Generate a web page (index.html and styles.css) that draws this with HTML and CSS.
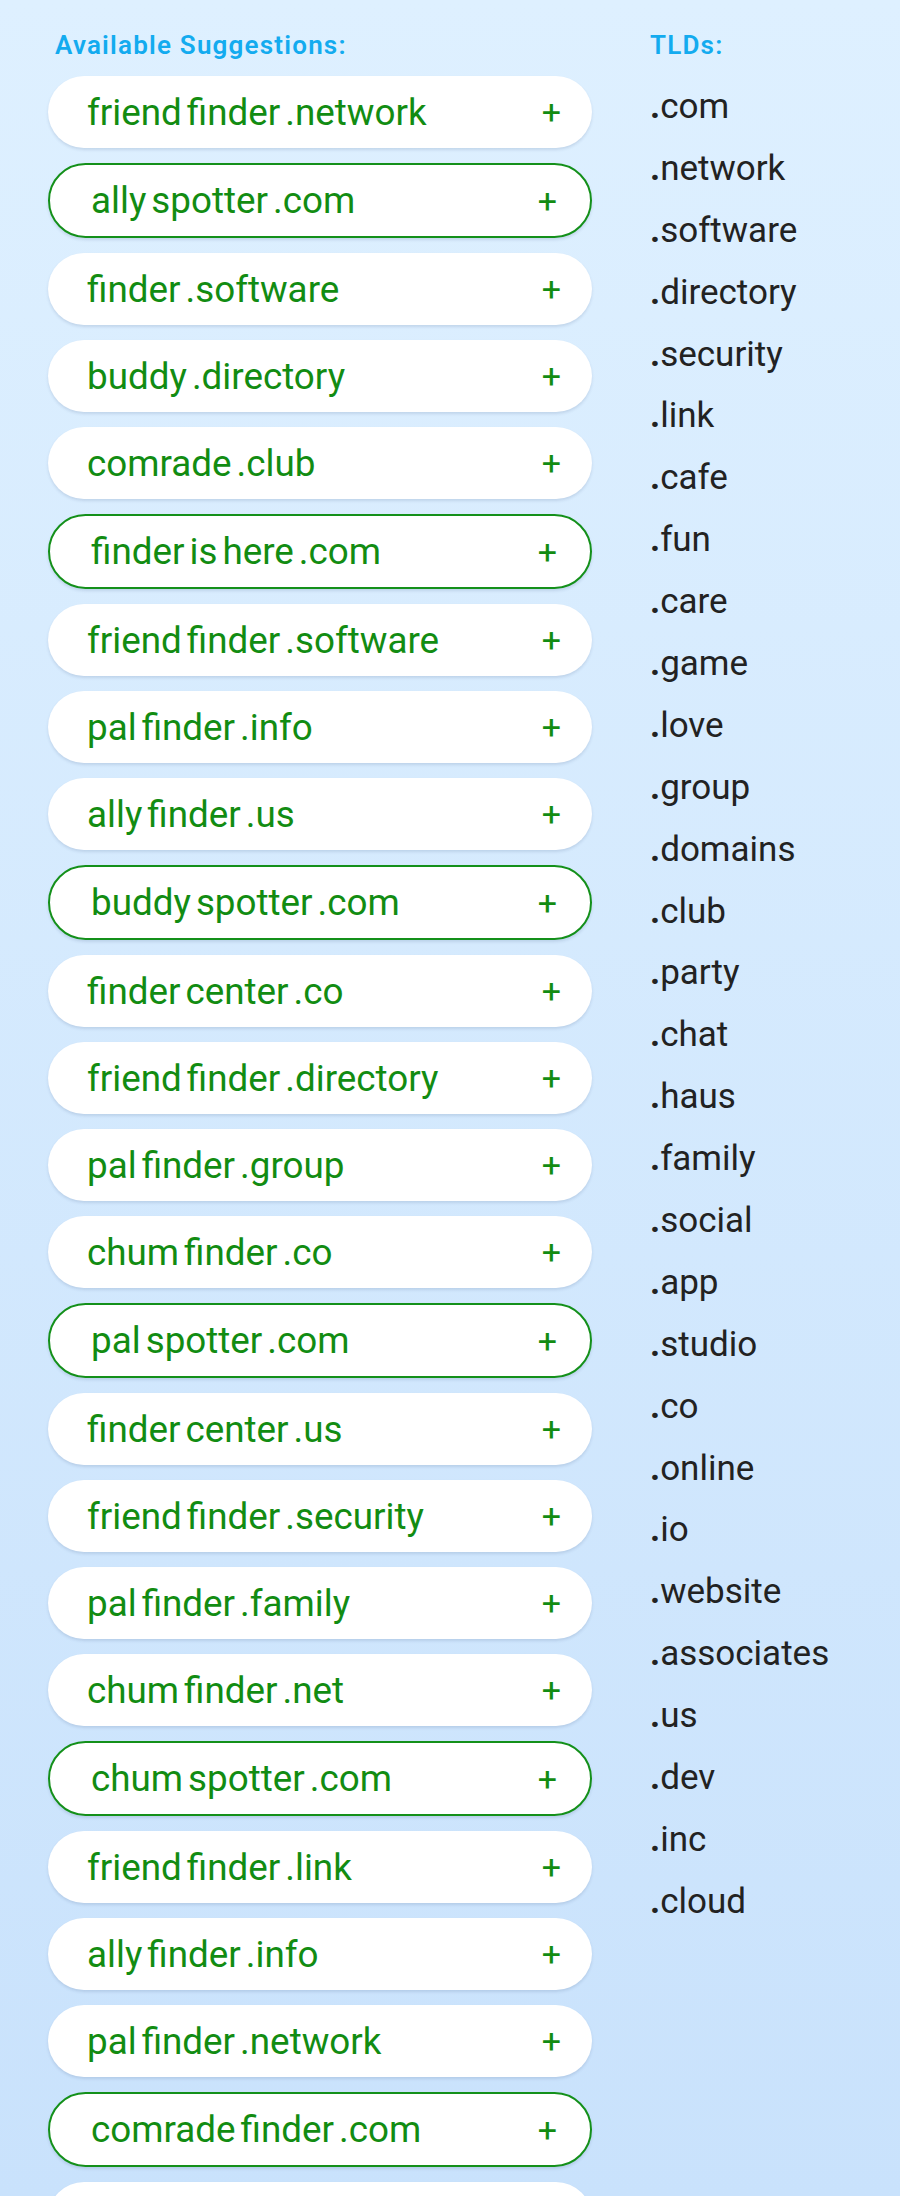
FILE: index.html
```html
<!DOCTYPE html>
<html lang="en">
<head>
<meta charset="utf-8">
<title>Domain Suggestions</title>
<link rel="stylesheet" href="styles.css">
</head>
<body>
<main class="page">
  <section class="suggestions">
    <h2 class="heading">Available Suggestions:</h2>
    <ul class="pills">
      <li class="pill"><span class="name"><span>friend</span><span>finder</span><span>.network</span></span><span class="add">+</span></li>
      <li class="pill pill--hl"><span class="name"><span>ally</span><span>spotter</span><span>.com</span></span><span class="add">+</span></li>
      <li class="pill"><span class="name"><span>finder</span><span>.software</span></span><span class="add">+</span></li>
      <li class="pill"><span class="name"><span>buddy</span><span>.directory</span></span><span class="add">+</span></li>
      <li class="pill"><span class="name"><span>comrade</span><span>.club</span></span><span class="add">+</span></li>
      <li class="pill pill--hl"><span class="name"><span>finder</span><span>is</span><span>here</span><span>.com</span></span><span class="add">+</span></li>
      <li class="pill"><span class="name"><span>friend</span><span>finder</span><span>.software</span></span><span class="add">+</span></li>
      <li class="pill"><span class="name"><span>pal</span><span>finder</span><span>.info</span></span><span class="add">+</span></li>
      <li class="pill"><span class="name"><span>ally</span><span>finder</span><span>.us</span></span><span class="add">+</span></li>
      <li class="pill pill--hl"><span class="name"><span>buddy</span><span>spotter</span><span>.com</span></span><span class="add">+</span></li>
      <li class="pill"><span class="name"><span>finder</span><span>center</span><span>.co</span></span><span class="add">+</span></li>
      <li class="pill"><span class="name"><span>friend</span><span>finder</span><span>.directory</span></span><span class="add">+</span></li>
      <li class="pill"><span class="name"><span>pal</span><span>finder</span><span>.group</span></span><span class="add">+</span></li>
      <li class="pill"><span class="name"><span>chum</span><span>finder</span><span>.co</span></span><span class="add">+</span></li>
      <li class="pill pill--hl"><span class="name"><span>pal</span><span>spotter</span><span>.com</span></span><span class="add">+</span></li>
      <li class="pill"><span class="name"><span>finder</span><span>center</span><span>.us</span></span><span class="add">+</span></li>
      <li class="pill"><span class="name"><span>friend</span><span>finder</span><span>.security</span></span><span class="add">+</span></li>
      <li class="pill"><span class="name"><span>pal</span><span>finder</span><span>.family</span></span><span class="add">+</span></li>
      <li class="pill"><span class="name"><span>chum</span><span>finder</span><span>.net</span></span><span class="add">+</span></li>
      <li class="pill pill--hl"><span class="name"><span>chum</span><span>spotter</span><span>.com</span></span><span class="add">+</span></li>
      <li class="pill"><span class="name"><span>friend</span><span>finder</span><span>.link</span></span><span class="add">+</span></li>
      <li class="pill"><span class="name"><span>ally</span><span>finder</span><span>.info</span></span><span class="add">+</span></li>
      <li class="pill"><span class="name"><span>pal</span><span>finder</span><span>.network</span></span><span class="add">+</span></li>
      <li class="pill pill--hl"><span class="name"><span>comrade</span><span>finder</span><span>.com</span></span><span class="add">+</span></li>
      <li class="pill" aria-hidden="true"></li>
    </ul>
  </section>
  <aside class="tlds">
    <h2 class="heading">TLDs:</h2>
    <ul class="tld-list">
      <li><b>.</b>com</li>
      <li><b>.</b>network</li>
      <li><b>.</b>software</li>
      <li><b>.</b>directory</li>
      <li><b>.</b>security</li>
      <li><b>.</b>link</li>
      <li><b>.</b>cafe</li>
      <li><b>.</b>fun</li>
      <li><b>.</b>care</li>
      <li><b>.</b>game</li>
      <li><b>.</b>love</li>
      <li><b>.</b>group</li>
      <li><b>.</b>domains</li>
      <li><b>.</b>club</li>
      <li><b>.</b>party</li>
      <li><b>.</b>chat</li>
      <li><b>.</b>haus</li>
      <li><b>.</b>family</li>
      <li><b>.</b>social</li>
      <li><b>.</b>app</li>
      <li><b>.</b>studio</li>
      <li><b>.</b>co</li>
      <li><b>.</b>online</li>
      <li><b>.</b>io</li>
      <li><b>.</b>website</li>
      <li><b>.</b>associates</li>
      <li><b>.</b>us</li>
      <li><b>.</b>dev</li>
      <li><b>.</b>inc</li>
      <li><b>.</b>cloud</li>
    </ul>
  </aside>
</main>
</body>
</html>
```
FILE: styles.css
```css
html, body {
  margin: 0;
  padding: 0;
}

body {
  height: 2196px;
  background: linear-gradient(180deg, #def0ff 0%, #c9e2fc 100%);
  font-family: Roboto, "Liberation Sans", sans-serif;
  overflow: hidden;
}

.page {
  display: flex;
  align-items: flex-start;
  gap: 58px;
  padding: 30px 0 0 48px;
}

.heading {
  margin: 0;
  font-size: 26px;
  line-height: 30px;
  font-weight: 600;
  letter-spacing: 1.2px;
  color: #13abef;
}

.suggestions {
  width: 544px;
  flex: none;
}

.suggestions .heading {
  padding-left: 7px;
}

.pills {
  list-style: none;
  margin: 16px 0 0;
  padding: 0;
  display: flex;
  flex-direction: column;
  gap: 15px;
}

.pill {
  box-sizing: border-box;
  height: 72px;
  display: flex;
  align-items: center;
  justify-content: space-between;
  padding: 0 31px 0 39px;
  background: #fff;
  border-radius: 36px;
  box-shadow: 0 2px 3px rgba(60, 90, 130, 0.16);
  color: #128c12;
  font-size: 36.8px;
}

.pill--hl {
  height: 75px;
  border: 2px solid #14901a;
  border-radius: 38px;
  padding: 0 33px 0 41px;
}

.name {
  display: flex;
  gap: 5px;
  white-space: nowrap;
}

.add {
  font-size: 34px;
  font-weight: 400;
}

.tlds {
  flex: none;
}

.tld-list {
  list-style: none;
  margin: 16px 0 0;
  padding: 0;
  color: #222;
  font-size: 35px;
}

.tld-list li {
  height: 61.9px;
  line-height: 61.9px;
}

.tld-list b {
  font-weight: 700;
}
```
